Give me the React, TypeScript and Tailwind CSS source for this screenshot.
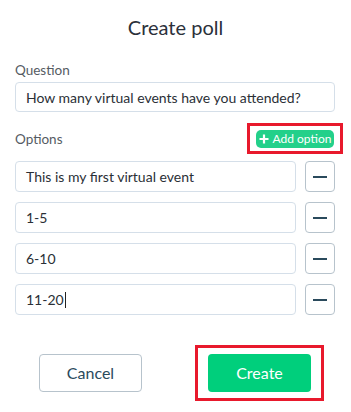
import React from "react";

const options = ["This is my first virtual event", "1-5", "6-10", "11-20"];

function Minus() {
  return (
    <button className="w-[30px] h-[31px] shrink-0 rounded-[4px] border border-[#b7c3cc] bg-white flex items-center justify-center">
      <span className="block w-[14px] h-[2px] bg-[#2a4a5c]" />
    </button>
  );
}

export default function App() {
  return (
    <div className="w-[351px] h-[412px] bg-white font-['Lato',sans-serif] text-[#2a2f36] overflow-hidden">
      <div className="pt-[13px] text-center text-[20px] leading-[28px] text-[#2b303a]">Create poll</div>
      <div className="pl-[15px] pr-[16px] mt-[20px]">
        <div className="text-[13.5px] leading-[18px] text-[#555b63]">Question</div>
        <div className="mt-[3px] h-[30px] rounded-[4px] border border-[#d5dfe9] flex items-center pl-[10px] text-[14px]">
          How many virtual events have you attended?
        </div>
        <div className="mt-[11px] flex items-center justify-between h-[31px]">
          <div className="text-[13.5px] text-[#555b63] pt-[2px]">Options</div>
          <div className="border-[3px] border-[#e8192c] w-[96px] h-[31px] flex items-center justify-center mr-[-8px]">
            <div className="h-[18px] w-[78px] rounded-[5px] bg-[#23d08a] text-white text-[12px] flex items-center justify-center gap-[4px]">
              <svg width="10" height="10" viewBox="0 0 10 10" className="shrink-0">
                <path d="M5 0.5V9.5M0.5 5H9.5" stroke="white" strokeWidth="2.2" />
              </svg>
              <span>Add option</span>
            </div>
          </div>
        </div>
        <div className="mt-[7px] flex flex-col gap-[10px]">
          {options.map((o, i) => (
            <div key={i} className="flex items-center gap-[9px]">
              <div className="flex-1 h-[31px] rounded-[4px] border border-[#d5dfe9] flex items-center pl-[10px] text-[14px]">
                {o}
                {i === 3 && <span className="inline-block w-px h-[16px] bg-[#222] ml-[1px]" />}
              </div>
              <Minus />
            </div>
          ))}
        </div>
        <div className="mt-[30px] flex items-center">
          <button className="ml-[24px] w-[103px] h-[38px] rounded-[4px] border border-[#b7c3cc] text-[16px] text-[#2a4a5c] bg-white">
            Cancel
          </button>
          <div className="ml-[53px] border-[3px] border-[#e8192c] w-[129px] h-[56px] flex items-center justify-center">
            <button className="w-[103px] h-[38px] rounded-[4px] bg-[#00cf7c] text-white text-[16px]">Create</button>
          </div>
        </div>
      </div>
    </div>
  );
}
